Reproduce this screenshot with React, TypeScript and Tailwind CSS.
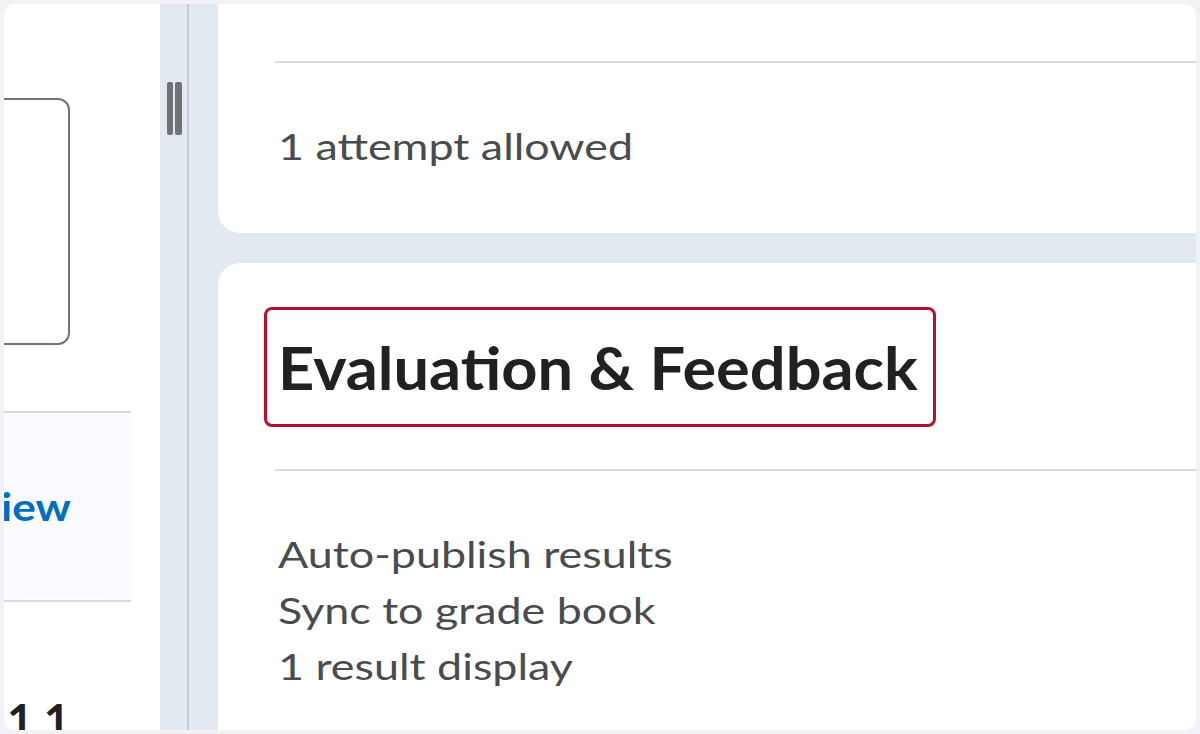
import React from "react";

export default function App() {
  return (
    <div
      className="h-[734px] w-[1200px] overflow-hidden bg-[#f2f1f6] p-1"
      style={{ fontFamily: "Lato, 'Noto Sans', sans-serif" }}
    >
      <div className="flex h-full overflow-hidden rounded-[10px] bg-white">
        {/* Left panel */}
        <aside className="flex w-[156px] shrink-0 flex-col overflow-hidden">
          <div className="mt-[94px] h-[247px] w-[66px] shrink-0 rounded-r-[12px] border-2 border-l-0 border-[#70757a]" />
          <div className="mt-[66px] flex h-[191px] w-[127px] shrink-0 items-center border-y-2 border-[#d6dce4] bg-[#f9fbff]">
            <span className="-ml-[3px] inline-block origin-left scale-x-[1.13] text-[39px] font-bold leading-none text-[#006fbf]">
              iew
            </span>
          </div>
          <div className="mt-[95px] shrink-0 pl-[3px] text-[46px] font-bold leading-none tracking-[10px] text-[#202122]">
            11
          </div>
        </aside>

        {/* Divider with handle */}
        <div className="flex w-[27px] shrink-0 bg-[#e3e9f1] pl-[7px] pt-[78px]">
          <div className="flex h-[53px] gap-[2px]">
            <div className="w-[6px] rounded-[2px] bg-[#6e7376]" />
            <div className="w-[7px] rounded-[2px] bg-[#6e7376]" />
          </div>
        </div>
        <div className="w-[2px] shrink-0 bg-[#c6ccd4]" />

        {/* Main */}
        <main className="flex min-w-0 flex-1 flex-col gap-[30px] bg-[#e3e9f1] pl-[29px]">
          <section className="flex h-[229px] shrink-0 flex-col rounded-bl-[22px] bg-white pl-[57px]">
            <div className="mt-[57px] border-t-2 border-[#d6dce4]" />
            <p className="ml-[3px] mt-[63px] text-[36px] leading-[40px] text-[#494c4e]">
              <span className="inline-block origin-left scale-x-[1.245] whitespace-nowrap">1 attempt allowed</span>
            </p>
          </section>
          <section className="flex flex-1 flex-col rounded-tl-[22px] bg-white pl-[46px]">
            <div className="mt-[44px] w-[672px] rounded-[8px] border-[3px] border-[#b5112e] pl-[11px]">
              <h2 className="flex h-[114px] items-center text-[59px] font-bold leading-none text-[#202122]">
                <span className="inline-block origin-left scale-x-[1.07] whitespace-nowrap">Evaluation &amp; Feedback</span>
              </h2>
            </div>
            <div className="ml-[11px] mt-[42px] border-t-2 border-[#d6dce4]" />
            <div className="ml-[14px] mt-[55px] flex flex-col text-[36px] leading-[56px] text-[#494c4e]">
              <span className="inline-block origin-left scale-x-[1.245] whitespace-nowrap">Auto-publish results</span>
              <span className="inline-block origin-left scale-x-[1.245] whitespace-nowrap">Sync to grade book</span>
              <span className="inline-block origin-left scale-x-[1.245] whitespace-nowrap">1 result display</span>
            </div>
          </section>
        </main>
      </div>
    </div>
  );
}
